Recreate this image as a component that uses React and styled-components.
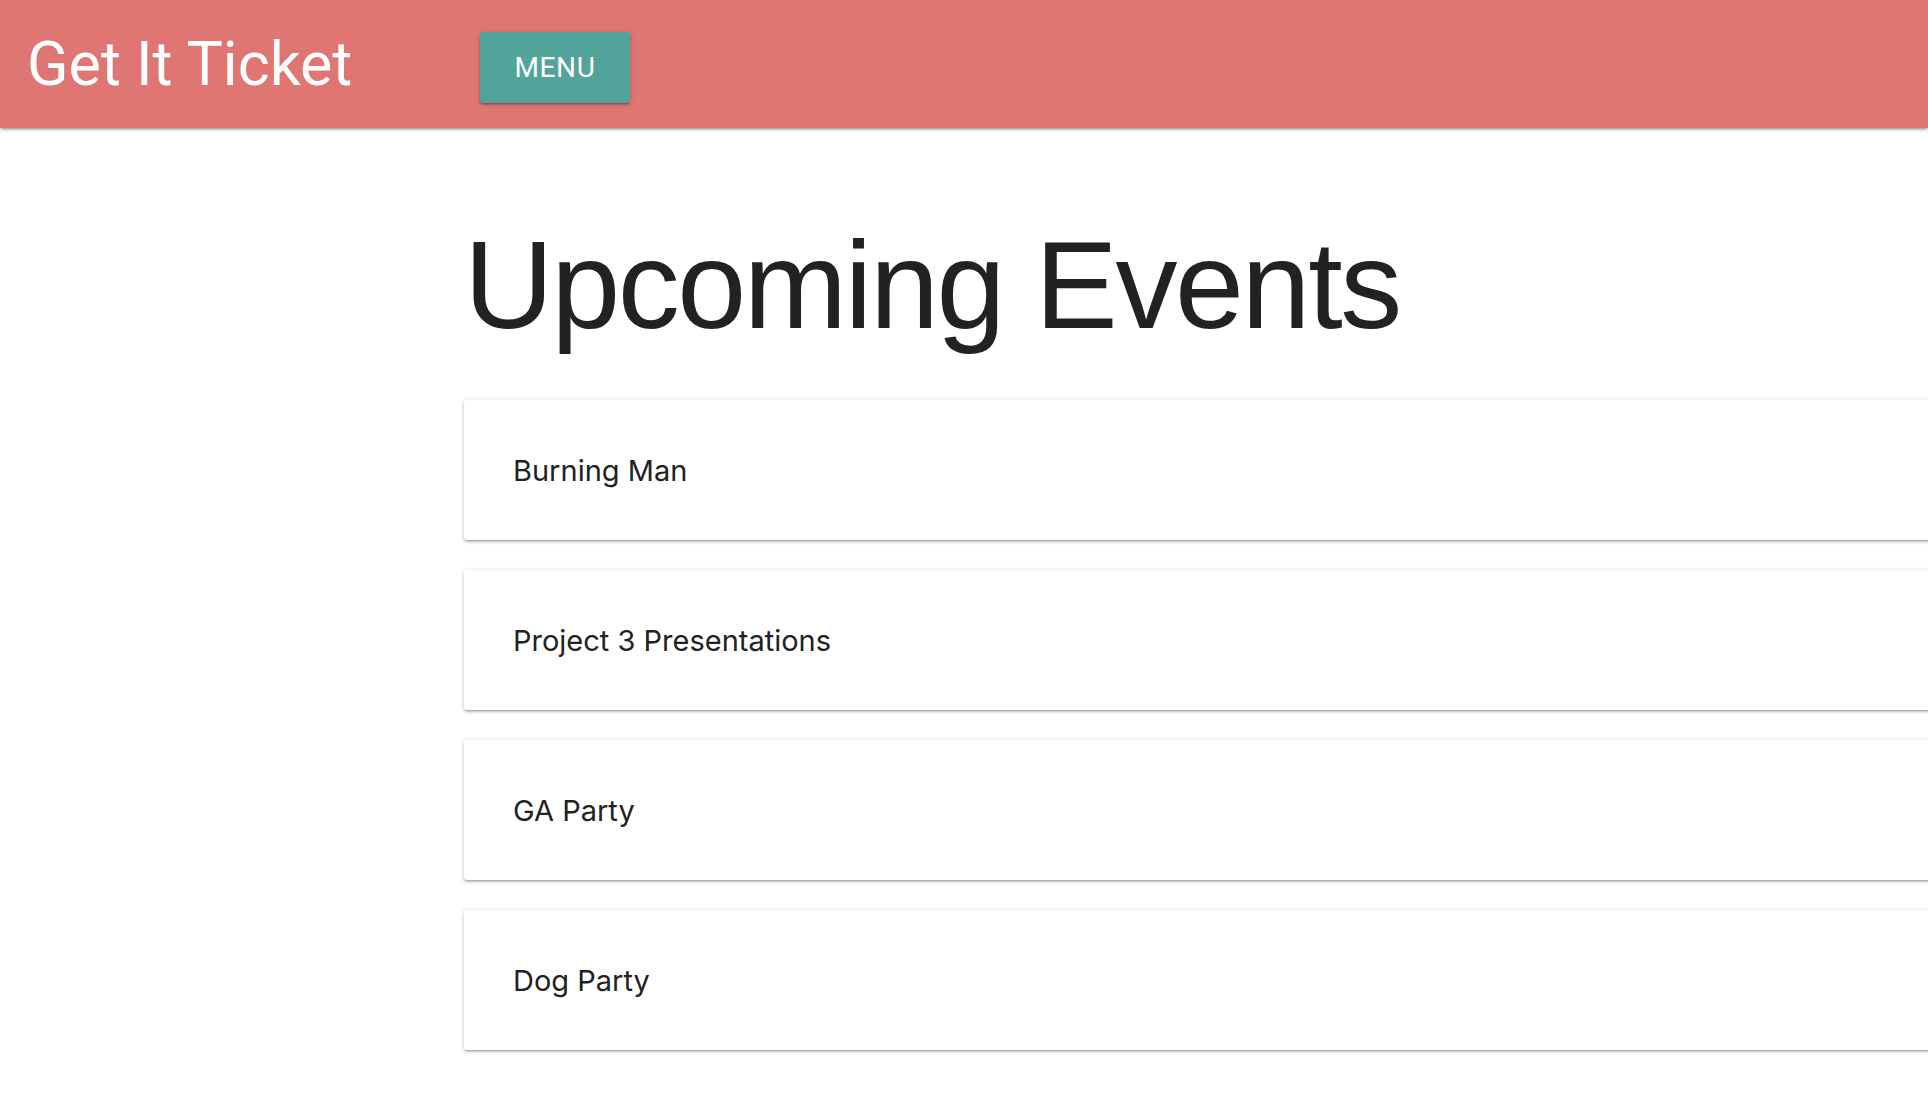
import React from "react";
import styled, { createGlobalStyle } from "styled-components";

const Global = createGlobalStyle`
  html, body { margin: 0; padding: 0; background: #fff; overflow: hidden; }
  body { font-family: Roboto, "Noto Sans", sans-serif; color: rgba(0,0,0,0.87); }
  * { box-sizing: border-box; }
`;

const Page = styled.div`
  width: 100%;
  min-height: 1096px;
  overflow: hidden;
`;

const Nav = styled.nav`
  height: 128px;
  background: #e07674;
  display: flex;
  align-items: center;
  padding-left: 27px;
  box-shadow: 0 2px 2px 0 rgba(0,0,0,0.14), 0 3px 1px -2px rgba(0,0,0,0.12), 0 1px 5px 0 rgba(0,0,0,0.2);
  position: relative;
  z-index: 1;
`;

const Brand = styled.a`
  width: 453px;
  font-family: Roboto, sans-serif;
  font-size: 61px;
  color: #fff;
  text-decoration: none;
  line-height: 1;
  margin-top: 0px;
`;

const MenuButton = styled.button`
  height: 71px;
  width: 150px;
  margin-top: 7px;
  border: none;
  border-radius: 3px;
  background: #52a39a;
  color: #fff;
  font-family: Roboto, sans-serif;
  font-size: 28px;
  letter-spacing: 0.6px;
  text-transform: uppercase;
  box-shadow: 0 2px 2px 0 rgba(0,0,0,0.14), 0 3px 1px -2px rgba(0,0,0,0.12), 0 1px 5px 0 rgba(0,0,0,0.2);
  cursor: pointer;
`;

const Main = styled.main`
  padding-left: 464px;
  padding-top: 95px;
`;

const Title = styled.h1`
  margin: 0 0 53px 0;
  font-family: "Liberation Sans", Arial, sans-serif;
  font-weight: 400;
  font-size: 124px;
  letter-spacing: -2.4px;
  line-height: 1;
  color: #222;
`;

const List = styled.div`
  display: flex;
  flex-direction: column;
  gap: 30px;
  width: 1600px;
`;

const Card = styled.div`
  height: 140px;
  background: #fff;
  border-radius: 3px;
  display: flex;
  align-items: center;
  padding-left: 49px;
  box-shadow: 0 2px 2px 0 rgba(0,0,0,0.14), 0 3px 1px -2px rgba(0,0,0,0.12), 0 1px 5px 0 rgba(0,0,0,0.2);
  font-family: Inter, "Noto Sans", sans-serif;
  font-size: 29px;
  color: #222;
`;

const events = ["Burning Man", "Project 3 Presentations", "GA Party", "Dog Party"];

export default function App() {
  return (
    <Page>
      <Global />
      <Nav>
        <Brand href="#">Get It Ticket</Brand>
        <MenuButton>Menu</MenuButton>
      </Nav>
      <Main>
        <Title>Upcoming Events</Title>
        <List>
          {events.map((e) => (
            <Card key={e}>{e}</Card>
          ))}
        </List>
      </Main>
    </Page>
  );
}
